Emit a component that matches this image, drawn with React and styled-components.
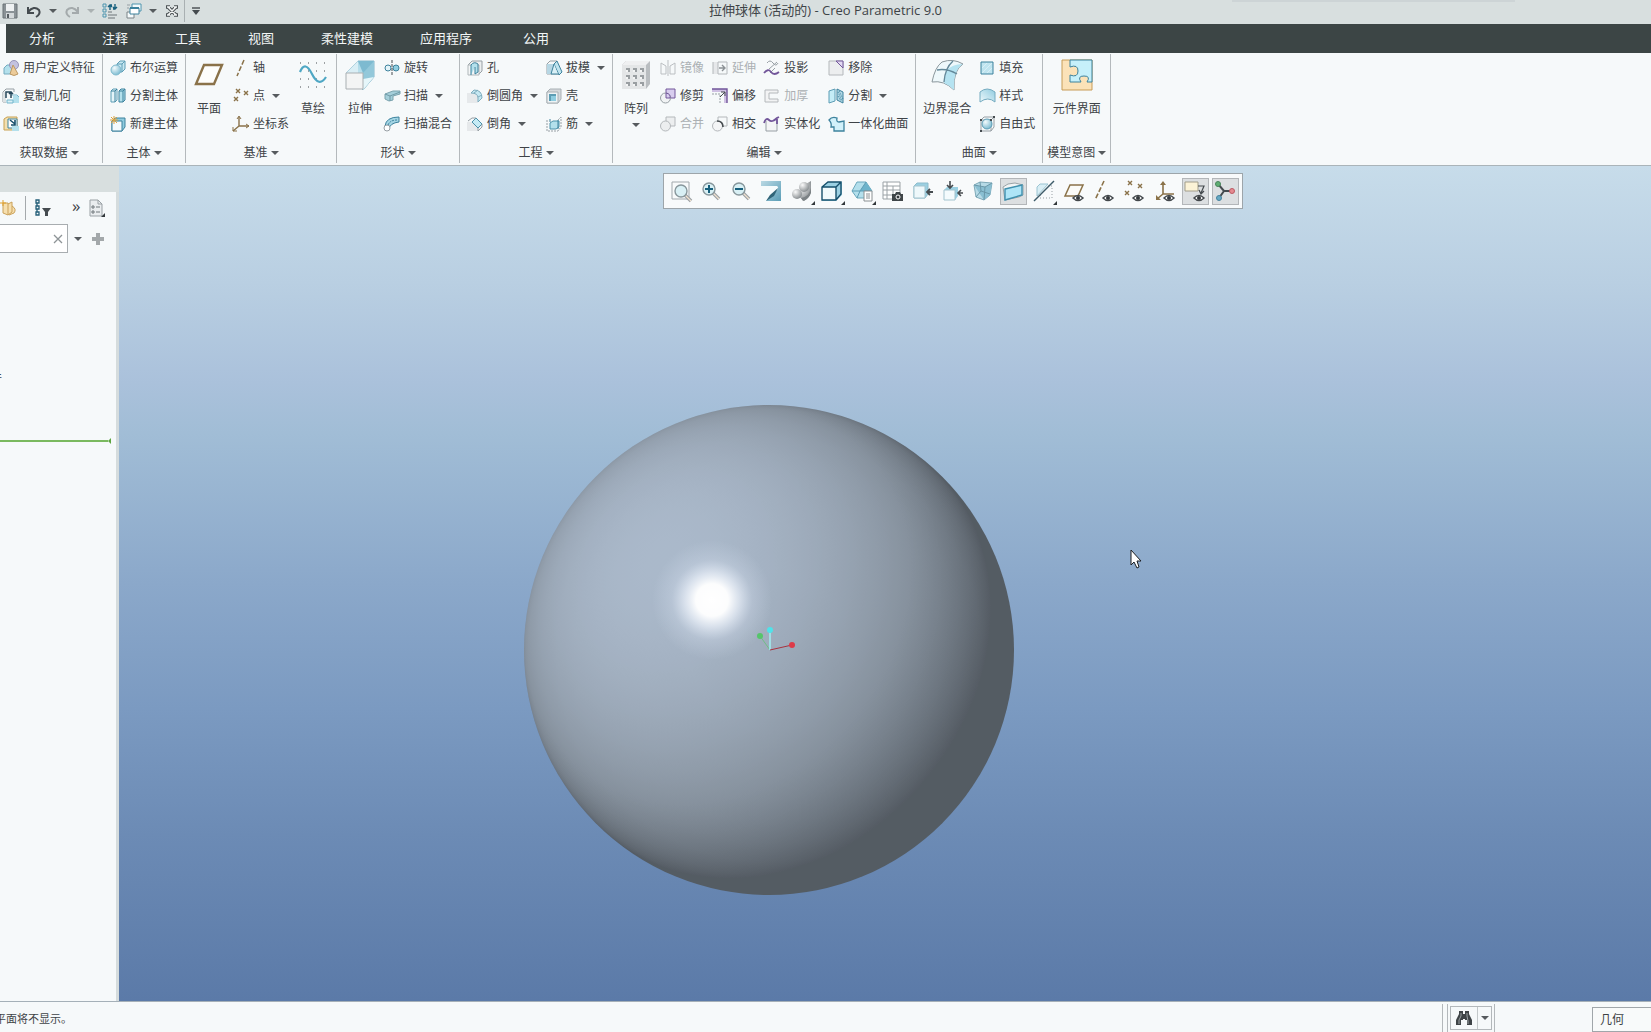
import styled, { createGlobalStyle } from "styled-components";

const GlobalStyle = createGlobalStyle`
    * {
        box-sizing: border-box;
    }
    body {
        margin: 0;
        overflow: hidden;
        background: #f6f9fa;
        color: #3e4347;
        font-family: "Open Sans", "Noto Sans CJK SC", sans-serif;
        font-size: 12px;
    }
    button, input, select {
        font: inherit;
        color: inherit;
    }
    button {
        padding: 0;
        border: 0;
        background: none;
        cursor: pointer;
    }
`;

const Window = styled.div`
    display: flex;
    flex-direction: column;
    height: 100vh;
`;

/* title bar */
const TitleBar = styled.header`
    position: relative;
    display: grid;
    grid-template-columns: 1fr auto 1fr;
    height: 24px;
    padding-bottom: 4px;
    background: #d8dfdf;
`;
const QuickAccess = styled.div`
    display: flex;
    align-items: center;
    padding-left: 2px;
`;
const QuickButton = styled.button`
    display: flex;
    align-items: center;
    justify-content: center;
    width: ${(p) => (p.$arrow ? 14 : 24)}px;
    height: 20px;
    margin-left: ${(p) => (p.$first ? -4 : 0)}px;
    opacity: ${(p) => (p.disabled ? 0.35 : 1)};
`;
const QuickDivider = styled.span`
    width: 1px;
    height: 22px;
    margin-right: 4px;
    background: #a9b0b2;
`;
const Title = styled.h1`
    margin: 0;
    font-size: 13px;
    font-weight: 400;
    line-height: 20px;
`;
const DockHandle = styled.span`
    position: absolute;
    top: 0;
    right: 136px;
    width: 283px;
    height: 2px;
    background: #cdd4d6;
`;

/* menu */
const MenuBar = styled.nav`
    display: flex;
    gap: 5px;
    height: 29px;
    margin-left: 6px;
    background: #3c4545;
`;
const MenuGroup = styled.div`
    display: flex;
`;
const MenuTab = styled.button`
    height: 27px;
    padding: 0 23px 0 24px;
    color: #f3f6f6;
    font-size: 13px;

    &:first-child {
        padding-left: 23px;
    }
`;

/* ribbon */
const Ribbon = styled.div`
    display: flex;
    margin-left: -4px;
    border-bottom: 1px solid #aab4b9;
`;
const RibbonGroup = styled.section`
    display: flex;
    flex-direction: column;
    margin: 1px 0 2px;
    border-right: 1px solid #b4b9bc;
`;
const GroupBody = styled.div`
    display: flex;
    justify-content: center;
    gap: 8px;
    padding: 0 7px;
`;
const GroupLabel = styled.button`
    display: flex;
    align-items: center;
    justify-content: center;
    gap: 3px;
    height: 25px;
    padding: 4px 4px 0;
    line-height: 16px;
`;
const Column = styled.div`
    display: flex;
    flex-direction: column;
`;
const Command = styled.button`
    display: flex;
    align-items: center;
    gap: 4px;
    height: 28px;
    line-height: 16px;
    white-space: nowrap;
    color: ${(p) => (p.disabled ? "#abb0b3" : "inherit")};
`;
const BigCommand = styled.button`
    display: flex;
    flex-direction: column;
    align-items: center;
    min-width: 32px;
    height: 84px;
    padding-top: 6px;
    line-height: 16px;
    white-space: nowrap;

    svg {
        margin-bottom: 11px;
    }
`;
const Caret = styled.span`
    width: 0;
    height: 0;
    margin-left: ${(p) => (p.$spaced ? 3 : 0)}px;
    margin-top: ${(p) => (p.$below ? 6 : 0)}px;
    border: 4px solid transparent;
    border-top: 4px solid #565b5e;
    border-bottom: 0;
`;

/* work area */
const WorkArea = styled.div`
    display: flex;
    flex: 1;
    min-height: 0;
`;
const TreePanel = styled.aside`
    display: flex;
    flex-direction: column;
    flex: none;
    width: 119px;
    border-right: 3px solid #d5dcdd;
`;
const PanelHeader = styled.div`
    height: 26px;
    margin-right: -3px;
    background: #d8dfdf;
`;
const PanelTools = styled.div`
    display: flex;
    align-items: center;
    height: 32px;
`;
const PanelDivider = styled.span`
    width: 1px;
    height: 24px;
    margin: 0 9px;
    background: #a4a9ac;
`;
const More = styled.button`
    margin: 0 8px 4px 21px;
    font-size: 17px;
    line-height: 20px;
`;
const FilterRow = styled.div`
    display: flex;
    align-items: center;
`;
const FilterBox = styled.div`
    display: flex;
    align-items: center;
    width: 68px;
    height: 29px;
    margin-right: 6px;
    padding-right: 1px;
    border: 1px solid #a8adb0;
    border-left: 0;
    background: #fff;
`;
const FilterInput = styled.input`
    flex: 1;
    min-width: 0;
    border: 0;
    outline: 0;
    background: none;
`;
const PlainButton = styled.button`
    position: relative;
    display: flex;
    align-items: center;
    justify-content: center;
    margin-right: ${(p) => p.$gap || 0}px;
`;
const TreeList = styled.div`
    display: flex;
    flex-direction: column;
    padding-top: 115px;
`;
const TreeItem = styled.div`
    display: flex;
    justify-content: flex-end;
    width: 2px;
    height: 20px;
    overflow: hidden;
    line-height: 20px;
    white-space: nowrap;
`;
const InsertMarker = styled.div`
    display: flex;
    align-items: center;
    margin: 50px 5px 0 0;

    &::before {
        content: "";
        flex: 1;
        height: 2px;
        background: #7ab95f;
    }
    &::after {
        content: "";
        border: 3px solid transparent;
        border-right-color: #5da540;
        border-left: 0;
    }
`;

const Viewport = styled.main`
    position: relative;
    flex: 1;
    overflow: hidden;
    background: linear-gradient(
        #c7dcea 0%,
        #b9cfe2 14%,
        #aac1db 26%,
        #a1bdd6 32%,
        #8ba8ca 50%,
        #7b9ac1 65%,
        #6c8bb5 80%,
        #5b7aa8 100%
    );
`;
const Model = styled.svg`
    position: absolute;
    left: 405px;
    top: 239px;
`;
const Pointer = styled.svg`
    position: absolute;
    left: 1011px;
    top: 383px;
`;
const ViewToolbar = styled.div`
    position: absolute;
    left: 544px;
    top: 7px;
    display: flex;
    align-items: center;
    justify-content: space-between;
    width: 580px;
    height: 36px;
    padding: 0 3px;
    border: 1px solid #9da5aa;
    background: #f8fafb;
`;
const ViewButton = styled.button`
    position: relative;
    display: flex;
    align-items: center;
    justify-content: center;
    width: 27px;
    height: 27px;
    border: 1px solid ${(p) => (p.$on ? "#b3b6b9" : "transparent")};
    background: ${(p) => (p.$on ? "#dcdfe1" : "none")};
`;
const Corner = styled.span`
    position: absolute;
    right: -1px;
    bottom: -1px;
    border: 2px solid #33383b;
    border-top-color: transparent;
    border-left-color: transparent;
`;

/* status bar */
const StatusBar = styled.footer`
    display: flex;
    align-items: center;
    height: 31px;
    border-top: 1px solid #a5b0b8;
    overflow: hidden;
`;
const Message = styled.p`
    flex: 1;
    margin: 0 0 0 -5px;
    padding-top: 2px;
    font-size: 11px;
`;
const Finder = styled.div`
    display: flex;
    align-items: center;
    height: 28px;
    margin: 2px 97px 0 0;
    padding: 0 2px;
    border: solid #b3b8bb;
    border-width: 0 1px;
`;
const FinderDivider = styled.span`
    width: 1px;
    height: 28px;
    margin: 2px 4px 0 0;
    background: #b3b8bb;
`;
const FinderBox = styled.div`
    display: flex;
    height: 24px;
    border: 1px solid #b3b8bb;

    button {
        display: flex;
        align-items: center;
        justify-content: center;
        width: 26px;
    }
    button + button {
        width: 14px;
        border-left: 1px solid #c3c8ca;
    }
`;
const FilterSelect = styled.select`
    width: 120px;
    height: 25px;
    margin-right: -61px;
    margin-top: 4px;
    padding: 0 7px;
    border: 1px solid #a0a6aa;
    border-radius: 0;
    background: #f8fafa;
    appearance: none;
`;

const T = "#3d829d";
const B = "#b3e0ec";
const L = "#e3f4f9";
const G = "#979fa4";
const P = "#72569a";
const W = "#8a7249";
const D = "#454b4f";

const eye = (
    <g>
        <path d="M9 17q5-5 10 0q-5 5-10 0z" fill="#fff" stroke="#44494d" strokeWidth="1.5" />
        <circle cx="14" cy="17" r="2" fill="#34393d" />
    </g>
);
const cross = (x, y) => <path key={x + "-" + y} d={`M${x} ${y}l4 4m0-4l-4 4`} stroke={W} strokeWidth="1.4" />;

// 16 x 16 glyphs
const small = {
    save: (
        <>
            <path d="M1 1h14v14H1z" fill="#8a9296" stroke="#6b7276" />
            <path d="M4 1h8v7H4z" fill="#eef1f2" />
            <path d="M4 10h8v5H4z" fill="#d3d8da" />
            <path d="M5 11h2v4H5z" fill="#575e62" />
        </>
    ),
    undo: <path d="M2 4v6h6M2 9q6-7 11-2q2 4-3 7" stroke={D} strokeWidth="2" />,
    redo: <path d="M14 4v6H8M14 9q-6-7-11-2q-2 4 3 7" stroke={D} strokeWidth="2" />,
    regen: (
        <>
            <path d="M1 1h3v3H1zM1 6h3v3H1zM1 11h3v3H1z" stroke="#4d94ae" />
            <path d="M6 9h4M6 12h9M6 15h7" stroke="#6d7579" />
            <path d="M8 7V2M6 4l2-2 2 2M13 1v5M11 4l2 2 2-2M8 2h2M11 6h2" stroke="#17617f" strokeWidth="1.4" />
        </>
    ),
    windows: (
        <>
            <path d="M6 1h9v7H6z" fill="#f5fafb" stroke="#4d94ae" />
            <path d="M1 9h7v6H1z" fill="#f5fafb" stroke="#7a8387" />
            <path d="M4 5h9v6H4z" fill="#fff" stroke={T} />
            <path d="M4 5h9" stroke={T} strokeWidth="2" />
            <path d="M1 2h3M1 5h2" stroke={G} />
        </>
    ),
    close: (
        <>
            <path d="M4 4l8 8M12 4l-8 8M2 4h4M10 4h4M2 12h4M10 12h4" stroke="#4b5154" strokeWidth="3.600" />
            <path d="M4 4l8 8M12 4l-8 8M3 4h3M10 4h3M3 12h3M10 12h3" stroke="#f4f6f6" strokeWidth="1.5" />
        </>
    ),
    customize: (
        <>
            <path d="M4 5h8" stroke={D} strokeWidth="1.4" />
            <path d="M4 7h8l-4 5z" fill={D} />
        </>
    ),
    udf: (
        <>
            <path d="M1 8l3-3h8v7l-2 2H1z" fill={B} stroke="#74abc0" />
            <circle cx="11" cy="5" r="4.500" fill="#c3c2df" stroke="#9694b9" />
            <path d="M10 5l5 9q-4 3-8 0z" fill="#eccb99" stroke="#bd9a66" />
        </>
    ),
    copyGeom: (
        <>
            <path d="M0 4l3-3h8v3M0 4v10h3" stroke={G} />
            <path d="M0 4h3v10H0z" fill="#dde2e4" />
            <path d="M10 8h6v7h-6z" fill={B} />
            <path d="M8 7h6l2 2" stroke="#72b5cc" />
            <path d="M3 10V4h5v6M6 6l2-2 2 2" stroke="#2a4a5c" strokeWidth="1.5" />
            <path d="M4 12h6v3H4z" fill="#d9f0f6" stroke="#72b5cc" />
        </>
    ),
    shrink: (
        <>
            <path d="M1 3l3-2h10v9l-2 4H1z" fill="#f3dfb0" stroke="#c7a152" />
            <path d="M5 3h9v9H5z" fill="#fff" stroke={T} />
            <path d="M9 10h7v5H9z" fill={B} />
            <path d="M7 4l5 4M12 4v5H8" stroke="#17506c" strokeWidth="1.6" />
        </>
    ),
    boolean: (
        <>
            <path d="M7 4l3-3h5v8l-3 3H7z" fill="#c8e8f2" stroke="#5d9db5" />
            <path d="M7 4h5v8M12 4l3-3" stroke="#5d9db5" />
            <circle cx="6" cy="10" r="5" fill="url(#ball)" stroke="#7fb9cd" />
        </>
    ),
    splitBody: (
        <>
            <path d="M1 3l2-2h4v11l-2 2H1z" fill={L} stroke="#5d9db5" />
            <path d="M9 3l2-2h4v11l-2 2H9z" fill={B} stroke={T} />
            <path d="M1 3h4v11M9 3h4v11M5 3l2-2M13 3l2-2" stroke={T} />
        </>
    ),
    newBody: (
        <>
            <path d="M2 5l3-3h10v9l-3 4H2z" fill="#8fcbde" stroke={T} />
            <path d="M2 5h10v10H2z" fill="#f3fafc" stroke={T} />
            <path d="M4 0v8M0 4h8M1 1l6 6M7 1L1 7" stroke="#dfa23a" />
        </>
    ),
    axis: <path d="M11 0L4 16" stroke={W} strokeWidth="1.5" strokeDasharray="5 2" />,
    point: [cross(3, 1), cross(11, 3), cross(1, 9)],
    csys: (
        <>
            <path d="M6 1v9h10M6 10l-6 5" stroke={W} strokeWidth="1.4" />
            <path d="M4 3l2-3 2 3M13 8l3 2-3 2M0 11v4h4" stroke={W} />
        </>
    ),
    revolve: (
        <>
            <circle cx="4" cy="8" r="3" fill={L} stroke={T} />
            <ellipse cx="12" cy="8" rx="3" ry="3" fill="#8fcde0" stroke={T} />
            <path d="M8 0v16" stroke={D} strokeDasharray="3 1" />
        </>
    ),
    sweep: (
        <>
            <path d="M1 6l8-3h7v3l-7 2v4l-4 1-4-2z" fill="#a5cfda" stroke="#7ba3ae" />
            <path d="M1 6l5 2 10-4M6 8v5" stroke="#6f9aa6" />
        </>
    ),
    sweptBlend: (
        <>
            <path d="M5 13Q6 7 15 6V1Q2 1 1 10z" fill="#a3d5e4" stroke={T} />
            <circle cx="3" cy="12" r="3" fill="#fff" stroke={G} />
            <path d="M4 9q2-5 9-5" stroke={T} strokeDasharray="2 1" />
        </>
    ),
    hole: (
        <>
            <path d="M1 5l4-4h10v10l-4 4" fill="#eceff0" stroke={G} />
            <path d="M1 5h11v10H1z" stroke="#b0b7ba" fill="#f4f6f7" />
            <path d="M4 15V5q3-4 7-1v8l-3 2V7" fill={B} stroke={T} />
        </>
    ),
    round: (
        <>
            <path d="M0 5h7q4 1 4 5v5H0z" fill="#e6e9eb" />
            <path d="M4 5l3-3q8 0 8 8l-4 4v-4q0-5-7-5z" fill="#c5e8f2" stroke="#7fadbe" />
            <path d="M7 5l4-3M11 9l4-2" stroke="#7fadbe" />
        </>
    ),
    chamfer: (
        <>
            <path d="M0 6h6l5 5v4H0z" fill="#e6e9eb" />
            <path d="M5 6l4-4 6 6-4 4z" fill="#c5ebf5" stroke="#4b91aa" />
            <path d="M11 12v3l4-4V8M1 5l4-3h4" stroke={G} />
        </>
    ),
    draft: (
        <>
            <path d="M1 4l3-3h7M1 4v10h12" stroke={G} />
            <path d="M1 4h7v10H1z" fill="#b7d7e4" />
            <path d="M8 4l3-3 5 11-3 3z" fill="#bfe4ef" stroke={T} />
            <path d="M8 4l-3 10h7" stroke={T} fill="#d9f0f6" />
        </>
    ),
    shell: (
        <>
            <path d="M1 4l3-3h11v10l-3 4H1z" fill="#d5d9dc" stroke="#a9b0b4" />
            <path d="M1 4h11v11H1z" fill="#eef3f5" stroke="#a9b0b4" />
            <path d="M3 6h7v7H3z" fill="#5c9db4" />
            <path d="M5 8h5v5H5z" fill="#8fcde0" />
        </>
    ),
    rib: (
        <>
            <path d="M1 4v11h11l3-4V1l-3 3" stroke={G} strokeDasharray="2 1" />
            <path d="M4 7l3-2h6v6l-3 2H4z" fill={B} stroke="#4b91aa" />
            <path d="M12 4v9M4 3v3" stroke={T} />
        </>
    ),
    mirror: (
        <>
            <path d="M1 3l5 3v8H1zM15 3l-5 3v8h5z" stroke="#bbbfc2" />
            <path d="M8 0v16" stroke="#bbbfc2" />
        </>
    ),
    extend: (
        <>
            <path d="M1 2h5v12H1z" fill="#e6e8ea" />
            <path d="M6 2h9v12H6zM1 2v12" stroke="#b4b8bb" />
            <path d="M7 8h5M10 5l3 3-3 3" stroke="#8c9195" strokeWidth="1.4" />
        </>
    ),
    project: (
        <>
            <path d="M3 3q3-4 6 0t5 0" stroke={G} />
            <path d="M13 2L5 9M11 8l-5 5" stroke={G} />
            <path d="M0 13q4-5 7-1t8 0" stroke={P} strokeWidth="1.8" />
        </>
    ),
    trim: (
        <>
            <path d="M6 1h9v9H6z" fill="#d8cdee" stroke={P} />
            <circle cx="5.500" cy="10" r="5" fill="#f1f3f4" stroke={G} />
            <path d="M6 5q5 1 4 5H6z" fill="#d8cdee" stroke={P} />
        </>
    ),
    offset: (
        <>
            <path d="M0 1h15v14h-3V4H0z" fill="#cfc0e3" />
            <path d="M0 1h15v14" stroke={P} strokeWidth="1.4" />
            <path d="M0 6h8v9" stroke={G} strokeDasharray="2 1" />
            <path d="M8 9l5-5M9 4h4v4" stroke={D} />
        </>
    ),
    thicken: <path d="M1 2h13v3H5v6h9v3H1z" fill="#f2f3f4" stroke="#b4b8bb" />,
    merge: (
        <>
            <path d="M6 1h9v9H6z" fill="#eceeef" stroke="#b4b8bb" />
            <circle cx="5.500" cy="10" r="5" fill="#eceeef" stroke="#b4b8bb" />
        </>
    ),
    intersect: (
        <>
            <path d="M6 5V1h9v9h-4" stroke="#b4b8bb" />
            <circle cx="5.500" cy="10" r="5" fill="#f4f5f6" stroke="#b4b8bb" />
            <path d="M5 5q6 0 6 6" stroke={D} strokeWidth="1.6" />
        </>
    ),
    solidify: (
        <>
            <path d="M2 5v10h11V5" fill="#f4f5f6" stroke={G} />
            <path d="M0 7q2-6 5-3t8-2l2-1M13 3v5" stroke={P} strokeWidth="1.8" />
        </>
    ),
    remove: (
        <>
            <path d="M1 1h14v14H1z" fill="#eceeef" stroke="#b4b8bb" />
            <path d="M8 1h7v7z" fill="#e3dbf2" stroke={P} />
        </>
    ),
    divide: (
        <>
            <path d="M1 3l6-2v12l-6 2z" fill="#c5ecf6" stroke="#5d9db5" />
            <path d="M9 1l6 3v11l-6-3z" fill="#b3d9e6" stroke={T} />
            <path d="M10 4l4 9M10 8l3 5M11 3l4 8" stroke={T} strokeDasharray="1 1" />
        </>
    ),
    unify: <path d="M1 4q3-4 8-2q-1 4 2 4l5-1v10H6v-4H3q1-4-2-7z" fill="#d2f1fa" stroke={T} strokeWidth="1.3" />,
    fill: (
        <>
            <path d="M2 2h12v12H2z" fill="#bfe4ef" stroke={T} />
            <path d="M3 8l5-5M3 13L13 3M8 13l5-5" stroke="#d7eff6" />
        </>
    ),
    style: <path d="M1 4q7-6 15 0v10q-7-6-15 0z" fill="url(#sheet)" stroke="#74abc0" />,
    freestyle: (
        <>
            <path d="M2 4l3-3h10v10l-3 4H2zM2 4h10v11M12 4l3-3" stroke={G} />
            <circle cx="8" cy="8" r="5" fill="url(#ball)" stroke="#5d9db5" />
            <path d="M1 3h2v2H1zM11 3h2v2h-2zM14 0h2v2h-2zM1 14h2v2H1z" fill={D} />
        </>
    ),
    newFolder: (
        <>
            <path d="M3 3h5v12l-5-2zM8 4l4-2v10l-4 3M12 6q5 3 2 7l-5 2" fill="#f6dfae" stroke="#cba25a" />
            <path d="M3 0v6M0 3h6" stroke="#df9f2b" />
        </>
    ),
    treeFilter: (
        <>
            <path d="M1 0h3v3H1zM1 6h3v3H1zM1 12h3v3H1zM2 3v3M2 9v3" stroke="#235e78" strokeWidth="1.3" />
            <path d="M7 8h9l-3 4v4h-3v-4z" fill={D} />
        </>
    ),
    plus: <path d="M8 2v12M2 8h12" stroke="#a3a8aa" strokeWidth="4" />,
    settings: (
        <>
            <path d="M2 0h8l4 4v12H2z" fill="#eaedef" stroke="#9aa1a5" />
            <path d="M10 0v4h4" stroke="#9aa1a5" />
            <path d="M4 6h2v2H4zM4 11h2v2H4zM8 7h4M8 12h4" stroke="#70787c" />
        </>
    ),
    clear: <path d="M4 4l8 8M12 4l-8 8" stroke="#8e9497" strokeWidth="1.3" />,
    binoculars: (
        <>
            <path d="M3 1h4v3h2V1h4v3l3 6v5h-5v-5H9V9H7v1H5v5H0v-5l3-6z" fill="#3f4447" />
            <path d="M5 3v3L3 10v4M11 3v3l1 5v3" stroke="#9aa0a3" />
        </>
    ),
};

// 30 x 30 glyphs
const large = {
    plane: <path d="M10 5h18l-8 19H2z" fill="#fdfdfb" stroke={W} strokeWidth="2.4" />,
    sketch: (
        <>
            <path
                d="M2 3h26M2 11h26M2 19h26M2 27h26"
                stroke={D}
                strokeDasharray="1 7"
            />
            <path d="M2 12Q7 0 14 14T28 17" stroke="#4ea7c4" strokeWidth="2.2" />
        </>
    ),
    extrude: (
        <>
            <path d="M1 13L13 1h16v16L18 30z" fill="url(#sheet)" stroke="#86b6c8" />
            <path d="M13 1h16v16l-11-4z" fill="#7dbad0" />
            <path d="M1 13L13 1v12z" fill="#d9eef5" />
            <path d="M18 13L29 1v16L18 30z" fill="#93c8da" />
            <path d="M18 19l11-2L18 30z" fill="#e6f6fa" />
            <path d="M1 13h17v16H1z" fill="#f3f4f4" stroke="#a9afb2" />
        </>
    ),
    pattern: (
        <>
            <path d="M1 5l4-4h24v23l-4 5H1z" fill="#b9bdc0" />
            <path d="M1 5h24v24H1z" fill="#e4e6e7" />
            <path d="M1 5l4-4h24l-4 4z" fill="#eff0f1" />
            {[9, 16, 23].map((y) =>
                [5, 12, 19].map((x) => (
                    <g key={x + "-" + y}>
                        <path d={`M${x} ${y - 1}h4v4h-4z`} fill="#9a9fa2" />
                        <path d={`M${x} ${y + 1}h2v2h-2z`} fill="#f4f5f5" />
                    </g>
                ))
            )}
        </>
    ),
    boundary: (
        <>
            <path d="M0 22Q3 7 10 2Q21-2 31 4Q21 10 22 30Q12 20 0 22z" fill="#eef8fb" stroke="#8b979c" />
            <path d="M14 11Q20 4 31 4Q21 10 22 30Q17 25 12 23z" fill="#b5e3f1" />
            <path d="M5 10Q15 8 25 14M21 1Q13 8 12 22" stroke="#64899a" strokeWidth="1.4" />
        </>
    ),
    component: (
        <>
            <path d="M0 0h30v30H0z" fill="#fbe2b8" stroke="#c79c56" />
            <path
                d="M8 0h22v22h-5q4-6-3-6t-3 6H8v-7q8 3 8-4t-8-4z"
                fill="#c6f0fa"
                stroke={T}
            />
        </>
    ),
};

// 20 x 20 glyphs of the view toolbar
const lens = (
    <>
        <path d="M12 12l6 6" stroke="#9aa0a4" strokeWidth="3.500" />
        <path d="M12 12l6 6" stroke="#f0e2d0" strokeWidth="1.2" />
        <circle cx="8" cy="8" r="6" fill="#d9f0f5" stroke="#88979c" strokeWidth="1.4" />
    </>
);
const view = {
    fit: (
        <>
            <path d="M1 1h17v17H1z" stroke="#a1a8ac" />
            <g transform="translate(2 2)">{lens}</g>
        </>
    ),
    zoomIn: (
        <>
            {lens}
            <path d="M8 4v8M4 8h8" stroke="#175f7c" strokeWidth="2" />
        </>
    ),
    zoomOut: (
        <>
            {lens}
            <path d="M4 8h8" stroke="#175f7c" strokeWidth="2" />
        </>
    ),
    repaint: (
        <>
            <path d="M0 0h20v20H0z" fill="url(#screen)" />
            <path d="M0 5h16q2 1 0 4Q12 13 10 15L5 20H0z" fill="#f6fbfc" />
            <path d="M17 7L9 14l-4 6 8-5z" fill="#2f6478" />
        </>
    ),
    shading: (
        <>
            <path d="M12 4l7-4v9q-1 8-7 11l-9-8 8-3z" fill="url(#metal)" />
            <circle cx="12" cy="6" r="5" fill="url(#metal)" />
            <circle cx="5" cy="13" r="5" fill="url(#metal)" />
            <path d="M9 17q8-1 10-10v5q-2 6-8 8z" fill="#7c8285" />
        </>
    ),
    cube: (
        <>
            <path d="M0 6l6-5h14v13l-6 6H0z" fill="#9bd0e2" />
            <path d="M0 6h14v13H0z" fill="#f1fafc" />
            <path d="M0 6l6-5h13v12l-5 6H0zM0 6h14v13M14 6l5-5" stroke="#17506c" strokeWidth="1.4" />
        </>
    ),
    saved: (
        <>
            <path d="M0 10l5-9h9l6 9-5 7H5z" fill="#b3dfec" stroke="#6ba8bd" />
            <path d="M8 10h12l-6-9z" fill="#6db3cb" />
            <path d="M14 1l-6 9-3 7M0 10h20" stroke="#5d9db5" />
            <path d="M12 10h8v10h-8z" fill="#fff" stroke="#8a9093" />
            <path d="M14 13h4M14 15h4M14 17h4" stroke="#8a9093" />
        </>
    ),
    manager: (
        <>
            <path d="M1 1h17v17H1zM1 5h17M1 9h17M1 14h17M5 1v17M11 5v13" fill="#fff" stroke="#9ba2a6" />
            <path d="M10 13h3l1-2h4l1 2h2v7H10z" fill="#3f4548" />
            <circle cx="16" cy="16" r="2" fill="#34393c" stroke="#fff" />
        </>
    ),
    section: (
        <>
            <path d="M1 5l3-3h11v11l-3 4H1z" fill="#9bd0e2" stroke="#8dbccc" />
            <path d="M1 5h11v12H1z" fill="#eef8fb" stroke="#a3c4cf" />
            <path d="M20 11h-6M17 8l-3 3 3 3" stroke={D} strokeWidth="1.8" />
        </>
    ),
    sections: (
        <>
            <path d="M1 9l3-3h11v9l-3 4H1z" fill="#9bd0e2" />
            <path d="M1 9h11v10H1z" fill="#f4fbfd" stroke="#a3c4cf" />
            <path d="M7 0v6M4 4l3 3 3-3M20 12h-5M18 9l-3 3 3 3" stroke={D} strokeWidth="1.6" />
        </>
    ),
    perspective: (
        <>
            <path d="M1 4l6-3 12 1-2 12-6 5-8-3z" fill="#b6dae6" stroke="#7ea9b8" />
            <path d="M1 4l11 2 7-4-2 12-6 5z" fill="#8abfd2" />
            <path d="M1 4l11 2 7-4M12 6l-1 13M7 1l1 9-5 6M8 10l9 3" stroke="#6a98a9" />
        </>
    ),
    clip: (
        <>
            <path d="M0 6q4-4 12-4l8 2v10l-4 2-14 3z" fill="#f1f4f5" stroke="#9aa3a7" />
            <path d="M2 8l17-4v10L2 19z" fill="#aee5f7" stroke="#3f90ae" strokeWidth="1.4" />
        </>
    ),
    noClip: (
        <>
            <path d="M3 6l3-3h8L3 15z" fill="#d9eef5" stroke="#9bc4d2" />
            <path d="M14 5h4v12H6V12" stroke={G} strokeDasharray="1 2" />
            <path d="M0 20L20 0" stroke="#3c5b69" strokeWidth="1.5" />
        </>
    ),
    planes: (
        <>
            <path d="M6 4h13l-5 11H1z" fill="#fbfbf8" stroke={W} strokeWidth="1.5" />
            {eye}
        </>
    ),
    axes: (
        <>
            <path d="M10 0L1 19" stroke={W} strokeWidth="1.6" strokeDasharray="5 2" />
            {eye}
        </>
    ),
    points: (
        <>
            {cross(4, 0)}
            {cross(14, 3)}
            {cross(1, 10)}
            {eye}
        </>
    ),
    csyss: (
        <>
            <path d="M8 2v11h11M8 13l-6 5" stroke={W} strokeWidth="1.6" />
            <path d="M5 4l3-4 3 4zM1 14v5h5z" fill={W} />
            {eye}
        </>
    ),
    annotations: (
        <>
            <path d="M0 1h13v9H0z" fill="#fcf3d7" stroke="#a39e8b" />
            <path d="M13 5h6l-3 7M14 9l2 4 3-3" stroke={D} strokeWidth="1.2" />
            {eye}
        </>
    ),
    spin: (
        <>
            <path d="M3 3l6 7h8M9 10l-5 7" stroke={D} strokeWidth="2" />
            <circle cx="3" cy="3" r="2.500" fill="#5fae73" stroke="#47845a" />
            <circle cx="17" cy="10" r="2.500" fill="#e58a90" stroke="#bb5a63" />
            <circle cx="4" cy="17" r="2.500" fill="#67a9c4" stroke="#45829d" />
        </>
    ),
};

const sets = { small: [small, 16], large: [large, 30], view: [view, 20] };

function Icon({ name, set = "small" }) {
    const [glyphs, size] = sets[set];
    return (
        <svg
            width={size}
            height={size}
            viewBox={`0 0 ${size} ${size}`}
            fill="none"
            overflow="visible"
            aria-hidden="true"
        >
            {glyphs[name]}
        </svg>
    );
}

// column entries : [icon, label, "arrow" | "off"]
const groups = [
    {
        label: "获取数据",
        parts: [[["udf", "用户定义特征"], ["copyGeom", "复制几何"], ["shrink", "收缩包络"]]],
    },
    {
        label: "主体",
        parts: [[["boolean", "布尔运算"], ["splitBody", "分割主体"], ["newBody", "新建主体"]]],
    },
    {
        label: "基准",
        parts: [
            { icon: "plane", text: "平面" },
            [["axis", "轴"], ["point", "点", "arrow"], ["csys", "坐标系"]],
            { icon: "sketch", text: "草绘" },
        ],
    },
    {
        label: "形状",
        parts: [
            { icon: "extrude", text: "拉伸" },
            [["revolve", "旋转"], ["sweep", "扫描", "arrow"], ["sweptBlend", "扫描混合"]],
        ],
    },
    {
        label: "工程",
        parts: [
            [["hole", "孔"], ["round", "倒圆角", "arrow"], ["chamfer", "倒角", "arrow"]],
            [["draft", "拔模", "arrow"], ["shell", "壳"], ["rib", "筋", "arrow"]],
        ],
    },
    {
        label: "编辑",
        parts: [
            { icon: "pattern", text: "阵列", arrow: true },
            [["mirror", "镜像", "off"], ["trim", "修剪"], ["merge", "合并", "off"]],
            [["extend", "延伸", "off"], ["offset", "偏移"], ["intersect", "相交"]],
            [["project", "投影"], ["thicken", "加厚", "off"], ["solidify", "实体化"]],
            [["remove", "移除"], ["divide", "分割", "arrow"], ["unify", "一体化曲面"]],
        ],
    },
    {
        label: "曲面",
        parts: [
            { icon: "boundary", text: "边界混合" },
            [["fill", "填充"], ["style", "样式"], ["freestyle", "自由式"]],
        ],
    },
    {
        label: "模型意图",
        parts: [{ icon: "component", text: "元件界面" }],
    },
];

const viewTools = [
    "fit", "zoomIn", "zoomOut", "repaint", "shading", "cube", "saved", "manager",
    "section", "sections", "perspective", "clip", "noClip", "planes", "axes",
    "points", "csyss", "annotations", "spin",
];
const withMenu = ["shading", "cube", "saved", "noClip"];
const pressed = ["clip", "annotations", "spin"];

function RibbonPart({ part }) {
    if (!Array.isArray(part)) {
        return (
            <BigCommand>
                <Icon name={part.icon} set="large" />
                {part.text}
                {part.arrow && <Caret $below />}
            </BigCommand>
        );
    }
    return (
        <Column>
            {part.map(([icon, text, flag]) => (
                <Command key={icon} disabled={flag === "off"}>
                    <Icon name={icon} />
                    {text}
                    {flag === "arrow" && <Caret $spaced />}
                </Command>
            ))}
        </Column>
    );
}

// falloff of a sphere seen from the front : sqrt(1 - r^2)
const falloff = Array.from({ length: 25 }, (_, i) => {
    const angle = (i / 24) * (Math.PI / 2);
    const level = Math.round(Math.cos(angle) * 0.553 * 255);
    return { at: Math.sin(angle), color: `rgb(${level},${level},${level})` };
});

function Sphere() {
    return (
        <Model width="490" height="490" viewBox="0 0 490 490" role="img" aria-label="拉伸球体">
            <defs>
                <linearGradient id="side" gradientUnits="userSpaceOnUse" x1="431" y1="404" x2="59" y2="86">
                    <stop offset="0.05" stopColor="#000" />
                    <stop offset="1" stopColor="#b4b4b4" />
                </linearGradient>
                <radialGradient id="front" gradientUnits="userSpaceOnUse" cx="245" cy="245" r="245">
                    {falloff.map((stop) => (
                        <stop key={stop.at} offset={stop.at} stopColor={stop.color} />
                    ))}
                </radialGradient>
                <radialGradient id="shine">
                    <stop offset="0" stopColor="#fff" />
                    <stop offset="0.27" stopColor="#fff" stopOpacity="0.97" />
                    <stop offset="0.45" stopColor="#f2f7ff" stopOpacity="0.66" />
                    <stop offset="0.67" stopColor="#e3ecfa" stopOpacity="0.24" />
                    <stop offset="1" stopColor="#dbe6f5" stopOpacity="0" />
                </radialGradient>
                <filter id="tone" x="0" y="0" width="1" height="1" colorInterpolationFilters="sRGB">
                    <feComponentTransfer>
                        <feFuncR type="table" tableValues="0.333 0.333 0.528 0.67" />
                        <feFuncG type="table" tableValues="0.361 0.361 0.572 0.727" />
                        <feFuncB type="table" tableValues="0.392 0.392 0.62 0.796" />
                    </feComponentTransfer>
                </filter>
                <clipPath id="disc">
                    <circle cx="245" cy="245" r="245" />
                </clipPath>
            </defs>
            <g clipPath="url(#disc)">
                <g filter="url(#tone)">
                    <rect width="490" height="490" fill="url(#side)" />
                    <rect width="490" height="490" fill="url(#front)" style={{ mixBlendMode: "plus-lighter" }} />
                </g>
                <circle cx="188" cy="195" r="60" fill="url(#shine)" />
            </g>
            <path d="M246 245l-10-14" stroke="#6fbf86" />
            <path d="M246 245v-20" stroke="#9ff1f3" strokeWidth="1.5" />
            <path d="M246 245l22-5" stroke="#a8323f" />
            <circle cx="236" cy="231" r="3" fill="#55c56b" />
            <circle cx="246" cy="225" r="3" fill="#4fe3ea" />
            <circle cx="268" cy="240" r="3" fill="#dd3b49" />
        </Model>
    );
}

export default function App() {
    return (
        <Window>
            <GlobalStyle />
            <svg width="0" height="0" style={{ position: "absolute" }} aria-hidden="true">
                <defs>
                    <radialGradient id="ball" cx="0.35" cy="0.3" r="0.8">
                        <stop offset="0" stopColor="#f4fbfd" />
                        <stop offset="1" stopColor="#6fb5cd" />
                    </radialGradient>
                    <radialGradient id="metal" cx="0.35" cy="0.3" r="0.7">
                        <stop offset="0" stopColor="#fbfbfb" />
                        <stop offset="1" stopColor="#8c9194" />
                    </radialGradient>
                    <linearGradient id="sheet" x1="0" y1="1" x2="1" y2="0">
                        <stop offset="0" stopColor="#eef9fc" />
                        <stop offset="1" stopColor="#8fcbdf" />
                    </linearGradient>
                    <linearGradient id="screen" x1="0" y1="0" x2="1" y2="1">
                        <stop offset="0" stopColor="#b9d9e4" />
                        <stop offset="1" stopColor="#5a9db6" />
                    </linearGradient>
                </defs>
            </svg>

            <TitleBar>
                <QuickAccess>
                    <QuickButton $first aria-label="保存"><Icon name="save" /></QuickButton>
                    <QuickButton aria-label="撤消"><Icon name="undo" /></QuickButton>
                    <QuickButton $arrow aria-label="撤消列表"><Caret /></QuickButton>
                    <QuickButton disabled aria-label="重做"><Icon name="redo" /></QuickButton>
                    <QuickButton $arrow disabled aria-label="重做列表"><Caret /></QuickButton>
                    <QuickButton aria-label="重新生成"><Icon name="regen" /></QuickButton>
                    <QuickButton aria-label="窗口"><Icon name="windows" /></QuickButton>
                    <QuickButton $arrow aria-label="窗口列表"><Caret /></QuickButton>
                    <QuickButton aria-label="关闭"><Icon name="close" /></QuickButton>
                    <QuickDivider />
                    <QuickButton $arrow aria-label="自定义"><Icon name="customize" /></QuickButton>
                </QuickAccess>
                <Title>拉伸球体 (活动的) - Creo Parametric 9.0</Title>
                <DockHandle />
            </TitleBar>

            <MenuBar>
                <MenuGroup>
                    {["分析", "注释", "工具", "视图", "柔性建模", "应用程序"].map((name) => (
                        <MenuTab key={name}>{name}</MenuTab>
                    ))}
                </MenuGroup>
                <MenuGroup>
                    <MenuTab>公用</MenuTab>
                </MenuGroup>
            </MenuBar>

            <Ribbon>
                {groups.map((group) => (
                    <RibbonGroup key={group.label}>
                        <GroupBody>
                            {group.parts.map((part, i) => (
                                <RibbonPart key={i} part={part} />
                            ))}
                        </GroupBody>
                        <GroupLabel>
                            {group.label}
                            <Caret />
                        </GroupLabel>
                    </RibbonGroup>
                ))}
            </Ribbon>

            <WorkArea>
                <TreePanel>
                    <PanelHeader />
                    <PanelTools>
                        <PlainButton aria-label="新建"><Icon name="newFolder" /></PlainButton>
                        <PanelDivider />
                        <PlainButton aria-label="树过滤器"><Icon name="treeFilter" /></PlainButton>
                        <More aria-label="更多">»</More>
                        <PlainButton aria-label="设置">
                            <Icon name="settings" />
                            <Corner />
                        </PlainButton>
                    </PanelTools>
                    <FilterRow>
                        <FilterBox>
                            <FilterInput aria-label="搜索" />
                            <PlainButton aria-label="清除"><Icon name="clear" /></PlainButton>
                        </FilterBox>
                        <PlainButton $gap={8} aria-label="搜索选项"><Caret /></PlainButton>
                        <PlainButton aria-label="添加"><Icon name="plus" /></PlainButton>
                    </FilterRow>
                    <TreeList>
                        <TreeItem>零件</TreeItem>
                        <InsertMarker />
                    </TreeList>
                </TreePanel>

                <Viewport>
                    <Sphere />
                    <ViewToolbar>
                        {viewTools.map((name) => (
                            <ViewButton key={name} $on={pressed.includes(name)} aria-label={name}>
                                <Icon name={name} set="view" />
                                {withMenu.includes(name) && <Corner />}
                            </ViewButton>
                        ))}
                    </ViewToolbar>
                    <Pointer width="12" height="20" viewBox="0 0 12 20">
                        <path d="M1 1v15l3-3 3 6 2-1-2-6h4z" fill="#fff" stroke="#1c1f22" />
                    </Pointer>
                </Viewport>
            </WorkArea>

            <StatusBar>
                <Message>平面将不显示。</Message>
                <FinderDivider />
                <Finder>
                    <FinderBox>
                        <button aria-label="查找"><Icon name="binoculars" /></button>
                        <button aria-label="查找选项"><Caret /></button>
                    </FinderBox>
                </Finder>
                <FilterSelect aria-label="选择过滤器" defaultValue="几何">
                    <option>几何</option>
                </FilterSelect>
            </StatusBar>
        </Window>
    );
}
